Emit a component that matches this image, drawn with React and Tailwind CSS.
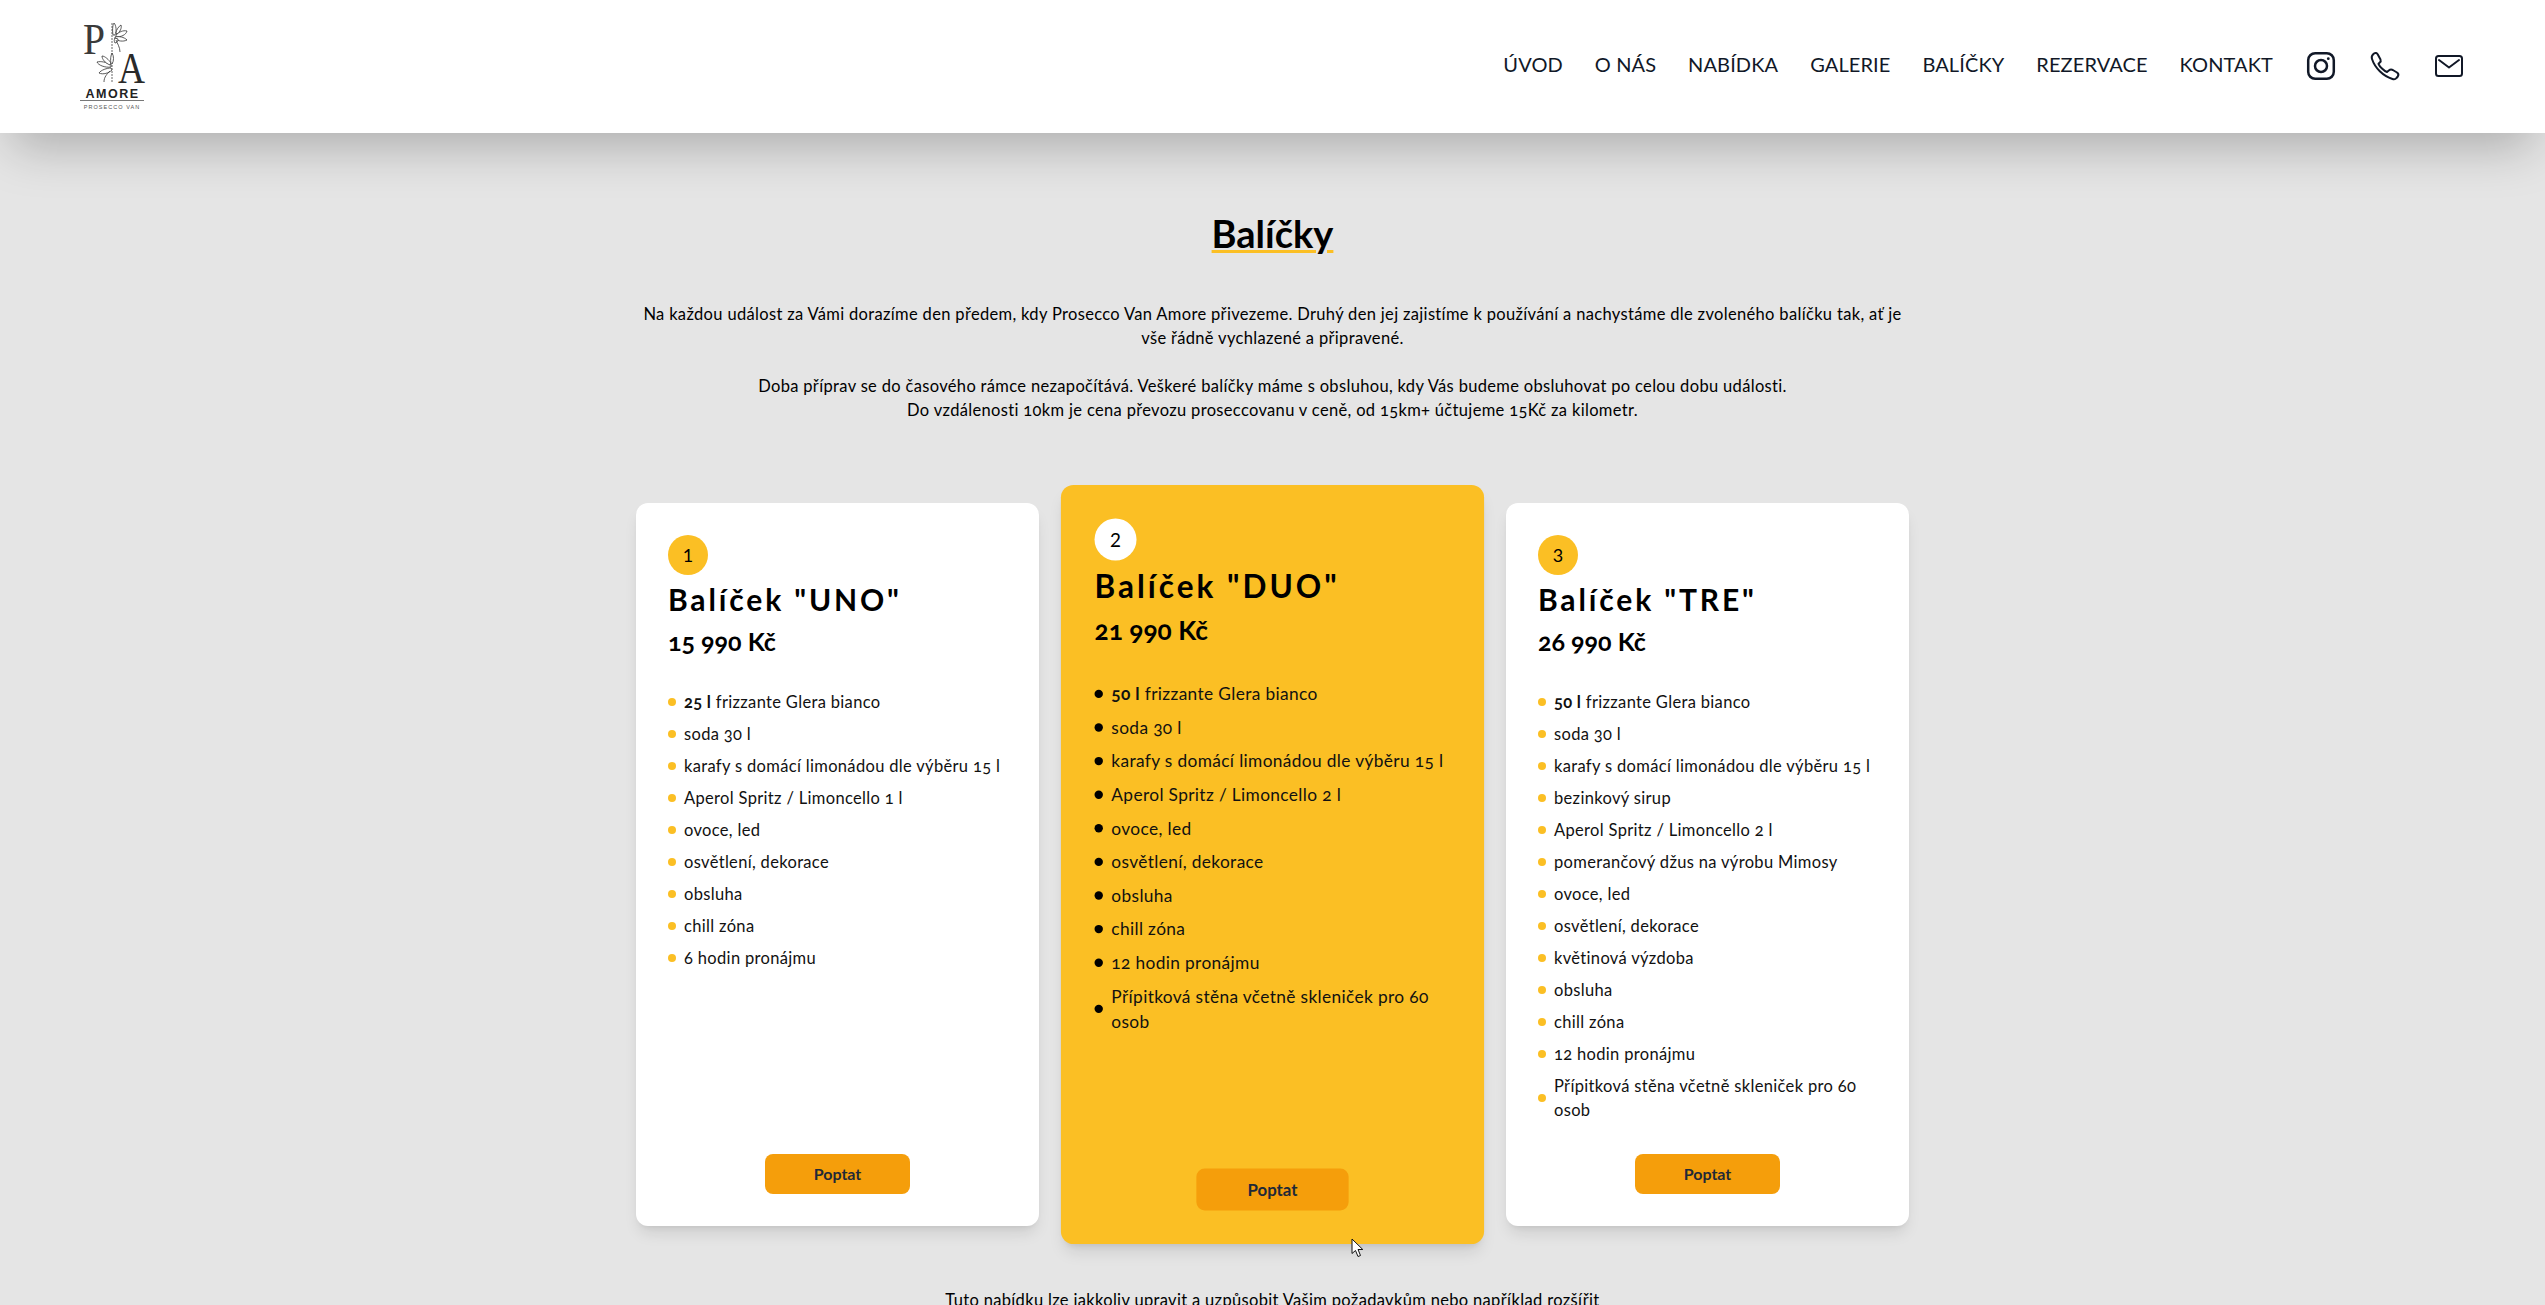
const FONT = "font-['Lato','Open_Sans',sans-serif]";

function Logo() {
  return (
    <svg width="70" height="96" viewBox="0 0 70 96" className="block overflow-visible" fill="none">
      <text x="3" y="34.5" fontFamily="'Liberation Serif',serif" fontSize="45" textLength="22" lengthAdjust="spacingAndGlyphs" fill="#3a3a3a">P</text>
      <text x="38" y="63.5" fontFamily="'Liberation Serif',serif" fontSize="44" textLength="27" lengthAdjust="spacingAndGlyphs" fill="#2a2a2a">A</text>
      <path d="M32 4V64" stroke="#666" strokeWidth="1" strokeDasharray="2 1" />
      <g stroke="#333" strokeWidth="0.8" fill="#fff">
        <path d="M33 16c-1-6 0-11 1-12 2 2 3 8 1 12z" />
        <path d="M36 16c3-3 7-5 11-4-1 4-6 6-11 6z" />
        <path d="M35 18c4-1 9 0 12 3-4 2-9 1-12-1z" />
        <path d="M36 14c0-3 3-7 5-8 1 3-1 7-4 9z" />
        <path d="M35 19c-1 2-1 3 0 5 2 0 3-2 3-4z" />
        <path d="M36 21c1 3 4 7 4 12" fill="none" />
        <path d="M31 46c-5-3-10-4-14-3 1 3 8 6 14 5z" />
        <path d="M31 49c-4 0-10 2-12 5 4 2 10 0 13-3z" />
        <path d="M31 44c-2-3-6-7-9-7 0 3 3 7 8 9z" />
        <path d="M31 45c-1-5 0-9 1-11 2 3 2 8 0 11z" />
        <path d="M30 52c-3 3-6 6-6 11" fill="none" />
      </g>
      <text x="32.5" y="78.5" textAnchor="middle" fontFamily="'Liberation Sans',sans-serif" fontSize="12.5" fontWeight="700" letterSpacing="1.5" fill="#222">AMORE</text>
      <rect x="0" y="81" width="64" height="1" fill="#777" />
      <text x="32" y="89.5" textAnchor="middle" fontFamily="'Liberation Sans',sans-serif" fontSize="5.5" letterSpacing="1.05" fill="#555">PROSECCO VAN</text>
    </svg>
  );
}

function Instagram() {
  return (
    <svg width="32" height="32" viewBox="0 0 32 32" fill="none" stroke="#111827" strokeWidth="2.5">
      <rect x="3.2" y="3.2" width="25.6" height="25.6" rx="7" />
      <circle cx="16" cy="16" r="6" />
      <circle cx="23.3" cy="8.7" r="1.4" fill="#111827" stroke="none" />
    </svg>
  );
}
function Phone() {
  return (
    <svg width="32" height="32" viewBox="-2 -2 32 32" fill="none" stroke="#111827" strokeWidth="2" strokeLinejoin="round">
      <path d="M3 1.5C4.5.5 6 1 6.8 2.5L9.5 7.5C10 8.8 9.7 9.8 8.8 10.5L7.5 11.8C8.5 14.5 13 19 16 20L17.8 18.5C19 17.5 20.5 17.3 21.8 18L26 20.5C27.5 21.5 27.7 23 26.8 24.5L25.5 26C24.5 27.3 23 27.5 21.5 27C12 24 4 16 1 7C.5 5.5 1 3.5 2 2.5Z" />
    </svg>
  );
}
function Mail() {
  return (
    <svg width="32" height="32" viewBox="0 0 32 32" fill="none" stroke="#111827" strokeWidth="2" strokeLinejoin="round" strokeLinecap="round">
      <rect x="3" y="6" width="26" height="20" rx="2.5" />
      <path d="M6 10l10 7.5L26 10" />
    </svg>
  );
}

function Cursor() {
  return (
    <svg className="absolute left-[1351px] top-[1238px] z-20" width="14" height="20" viewBox="0 0 14 20">
      <path d="M1 1V15.5L4.5 12.5L7 18.5L9.5 17.5L7 11.5H11.8Z" fill="#fff" stroke="#111" strokeWidth="1" />
    </svg>
  );
}

const uno = [
  [<b key="b" className="font-bold">25 l</b>, " frizzante Glera bianco"],
  "soda 30 l",
  "karafy s domácí limonádou dle výběru 15 l",
  "Aperol Spritz / Limoncello 1 l",
  "ovoce, led",
  "osvětlení, dekorace",
  "obsluha",
  "chill zóna",
  "6 hodin pronájmu",
];
const duo = [
  [<b key="b" className="font-bold">50 l</b>, " frizzante Glera bianco"],
  "soda 30 l",
  "karafy s domácí limonádou dle výběru 15 l",
  "Aperol Spritz / Limoncello 2 l",
  "ovoce, led",
  "osvětlení, dekorace",
  "obsluha",
  "chill zóna",
  "12 hodin pronájmu",
  "Přípitková stěna včetně skleniček pro 60 osob",
];
const tre = [
  [<b key="b" className="font-bold">50 l</b>, " frizzante Glera bianco"],
  "soda 30 l",
  "karafy s domácí limonádou dle výběru 15 l",
  "bezinkový sirup",
  "Aperol Spritz / Limoncello 2 l",
  "pomerančový džus na výrobu Mimosy",
  "ovoce, led",
  "osvětlení, dekorace",
  "květinová výzdoba",
  "obsluha",
  "chill zóna",
  "12 hodin pronájmu",
  "Přípitková stěna včetně skleniček pro 60 osob",
];

function Card({ n, name, price, items, featured }) {
  return (
    <div
      className={
        featured
          ? "flex flex-col rounded-xl bg-[#fbbf24] p-8 shadow-lg scale-105 z-10 text-black"
          : "flex flex-col rounded-xl bg-white p-8 shadow-lg text-black"
      }
    >
      <div className={featured ? "flex h-10 w-10 items-center justify-center rounded-full bg-white text-lg" : "flex h-10 w-10 items-center justify-center rounded-full bg-[#fbbf24] text-lg"}>
        {n}
      </div>
      <h3 className="mt-[6px] text-3xl font-bold tracking-[0.095em] leading-9">Balíček "{name}"</h3>
      <p className="mt-[8px] text-[25px] font-bold leading-8 [font-variant-numeric:oldstyle-nums]">{price}</p>
      <ul className="mt-[33px] flex flex-col gap-2 text-[16.5px] leading-6 text-[#111] tracking-[0.02em] [font-variant-numeric:oldstyle-nums]">
        {items.map((t, i) => (
          <li key={i} className="flex items-center gap-2">
            <span className={featured ? "h-2 w-2 shrink-0 rounded-full bg-black" : "h-2 w-2 shrink-0 rounded-full bg-[#fbbf24]"} />
            <span>{t}</span>
          </li>
        ))}
      </ul>
      <div className="mt-auto flex justify-center pt-8">
        <button className="h-10 w-[145px] rounded-lg bg-[#f59e0b] text-base font-bold text-[#1f2937]">Poptat</button>
      </div>
    </div>
  );
}

const links = ["ÚVOD", "O NÁS", "NABÍDKA", "GALERIE", "BALÍČKY", "REZERVACE", "KONTAKT"];

export default function App() {
  return (
    <div className={`relative h-[1305px] overflow-hidden bg-[#e5e5e5] ${FONT}`}>
      <header className="relative z-10 flex h-[133px] items-center justify-between bg-white pl-20 pr-20 shadow-2xl">
        <Logo />
        <nav className="flex items-center gap-8 pb-0.5 text-xl text-[#111827] tracking-[0.005em]">
          {links.map((l) => (
            <a key={l} className="pb-[3px]">{l}</a>
          ))}
          <Instagram />
          <Phone />
          <Mail />
        </nav>
      </header>
      <main className="flex flex-col items-center pt-[80px] text-black">
        <h1 className="text-[38px] font-bold leading-10 underline decoration-[#fbbf24] decoration-[3px] underline-offset-2">Balíčky</h1>
        <div className="mt-[49px] w-[1280px] text-center text-[16.5px] leading-6 tracking-[0.02em] [font-variant-numeric:oldstyle-nums]">
          <p>Na každou událost za Vámi dorazíme den předem, kdy Prosecco Van Amore přivezeme. Druhý den jej zajistíme k používání a nachystáme dle zvoleného balíčku tak, ať je vše řádně vychlazené a připravené.</p>
          <p className="mt-6">Doba příprav se do časového rámce nezapočítává. Veškeré balíčky máme s obsluhou, kdy Vás budeme obsluhovat po celou dobu události.</p>
          <p>Do vzdálenosti 10km je cena převozu proseccovanu v ceně, od 15km+ účtujeme 15Kč za kilometr.</p>
        </div>
        <section className="mt-[81px] grid w-[1273px] grid-cols-3 gap-8">
          <Card n="1" name="UNO" price="15 990 Kč" items={uno} />
          <Card n="2" name="DUO" price="21 990 Kč" items={duo} featured />
          <Card n="3" name="TRE" price="26 990 Kč" items={tre} />
        </section>
        <p className="mt-[62px] text-center text-[16.5px] leading-6 tracking-[0.02em]">Tuto nabídku lze jakkoliv upravit a uzpůsobit Vašim požadavkům nebo například rozšířit</p>
      </main>
      <Cursor />
    </div>
  );
}
